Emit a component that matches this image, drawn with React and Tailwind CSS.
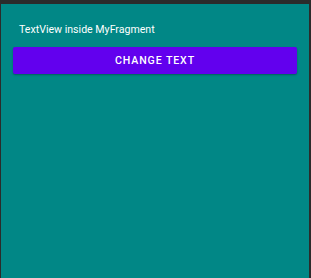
export default function App() {
  return (
    <div className="w-[311px] h-[278px] bg-[#2b2b2b] pt-[4px] pl-[1px] pr-[2px]">
      <div className="h-full bg-[#018786] flex flex-col">
        <div className="pl-[18px] pt-[19px] h-[43px] text-white text-[10.6px] font-['Roboto',sans-serif] leading-[14px]">
          TextView inside MyFragment
        </div>
        <div className="px-[12px]">
          <div className="h-[27px] rounded-[2px] bg-[#6200ee] flex items-center justify-center text-white font-['Roboto',sans-serif] font-medium text-[10.6px] tracking-[0.9px] shadow-[0_1px_2px_rgba(0,0,0,0.3)]">
            CHANGE TEXT
          </div>
        </div>
      </div>
    </div>
  );
}
